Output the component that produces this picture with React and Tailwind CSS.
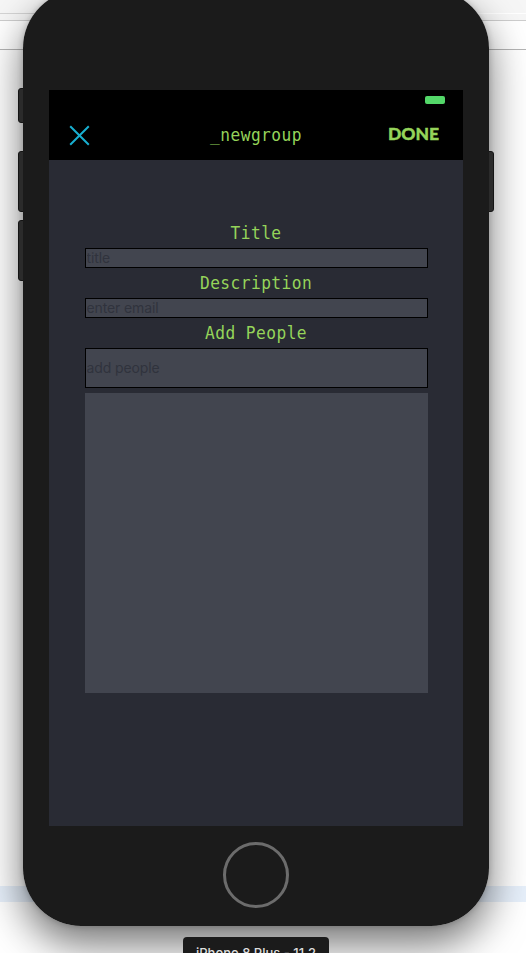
const label =
  "scale-x-90 text-center font-['DejaVu_Sans_Mono',monospace] text-[18px] tracking-[0.5px] text-[#95d45a]";
const field =
  "block w-full border border-black bg-[#42454f] px-[0.5px] pb-0.5 font-[Inter,sans-serif] text-[14px] tracking-[-0.12px] outline-none placeholder:text-[#30333d] placeholder:opacity-100";

function Backdrop() {
  return (
    <div className="flex h-full flex-col bg-white">
      <div className="h-[13px] bg-[#f6f6f6]" />
      <div className="h-px w-[200px] bg-[#d4d4d4]" />
      <div className="h-1.5 w-full bg-[#f6f6f6]" />
      <div className="h-px bg-[#cdcdcd]" />
      <div className="h-7" />
      <div className="h-px bg-[#b4b4b4]" />
      <div className="h-[836px]" />
      <div className="h-4 bg-[#e7f0fb]" />
    </div>
  );
}

function Screen() {
  return (
    <div className="flex h-[736px] w-[414px] flex-col bg-[#292b34]">
      <header className="h-[70px] bg-black">
        <div className="flex h-5 items-center justify-end pr-[18px]">
          <div className="h-2 w-5 rounded-[2px] bg-[#53d769]" />
        </div>
        <div className="grid h-[50px] grid-cols-[110px_194px_110px] items-center">
          <svg className="ml-5 size-[21px]" viewBox="0 0 21 21" fill="none" stroke="#18afd0" strokeWidth="2">
            <path d="M1.2 1.2L19.8 19.8M19.8 1.2L1.2 19.8" />
          </svg>
          <div className={label + " pb-0.5"}>_newgroup</div>
          <div className="pr-6 pb-0.5 text-right font-[Lato,sans-serif] text-[17.5px] leading-none font-black text-[#95d45a] [-webkit-text-stroke:0.4px_#95d45a]">DONE</div>
        </div>
      </header>
      <main className="ml-9 w-[343px] pt-[58px]">
        <div className={label + " h-[30px] pr-px leading-[30px]"}>Title</div>
        <input className={field + " h-5"} placeholder="title" />
        <div className={label + " h-[30px] pr-px leading-[30px]"}>Description</div>
        <input className={field + " h-5"} placeholder="enter email" />
        <div className={label + " h-[30px] pr-px leading-[30px]"}>Add People</div>
        <input className={field + " h-10"} placeholder="add people" />
        <div className="mt-[5px] h-[300px] bg-[#42454f]" />
      </main>
    </div>
  );
}

export default function App() {
  return (
    <div className="relative h-[953px] w-[526px] overflow-hidden">
      <Backdrop />
      <div className="absolute top-[-10px] left-[23px] h-[936px] w-[466px] rounded-[58px] shadow-[0_18px_40px_rgba(0,0,0,0.55),0_0_6px_rgba(0,0,0,0.2)]">
        <div className="absolute top-[98px] -left-[5px] h-[35px] w-3 rounded-[3px] border border-[#151515] bg-[#2b2b2b]" />
        <div className="absolute top-[161px] -left-[5px] h-[61px] w-3 rounded-[3px] border border-[#151515] bg-[#2b2b2b]" />
        <div className="absolute top-[230px] -left-[5px] h-[61px] w-3 rounded-[3px] border border-[#151515] bg-[#2b2b2b]" />
        <div className="absolute top-[161px] -right-[5px] h-[61px] w-3 rounded-[3px] border border-[#151515] bg-[#2b2b2b]" />
        <div className="relative flex h-full flex-col items-center rounded-[58px] bg-[#1b1b1b] pt-[100px]">
          <Screen />
          <div className="mt-4 size-[66px] rounded-full border-3 border-[#6c6c6c]" />
        </div>
      </div>
      <div className="absolute top-[937px] left-[183px] h-[30px] w-[146px] rounded-[4px] bg-[#1b1b1b] pt-[7px] text-center font-[Inter,sans-serif] text-[13px] leading-[18px] font-medium whitespace-nowrap text-[#dedede]">
        iPhone 8 Plus - 11.2
      </div>
    </div>
  );
}
